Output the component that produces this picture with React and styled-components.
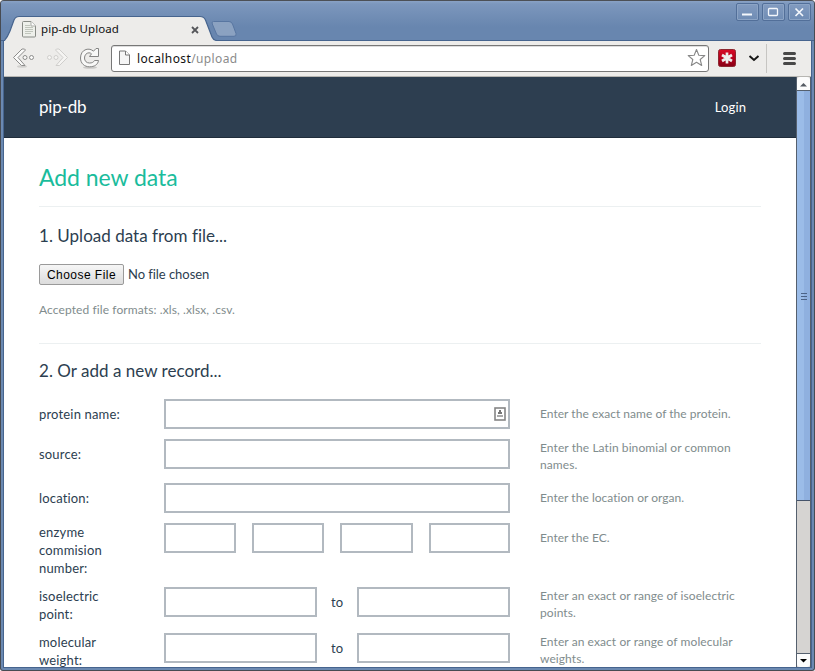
import React from "react";
import styled, { createGlobalStyle } from "styled-components";

const Global = createGlobalStyle`
  * { box-sizing: border-box; }
  body { margin: 0; background: #fff; overflow: hidden; }
`;

const Window = styled.div`
  width: 815px;
  height: 671px;
  display: flex;
  flex-direction: column;
  overflow: hidden;
  border: 1px solid #474b52;
  border-top-color: #4c5056;
  border-radius: 4px 4px 3px 3px;
  background: #6b89b1;
  font-family: "Lato", sans-serif;
`;

const TitleBar = styled.header`
  height: 40px;
  flex: none;
  display: flex;
  justify-content: space-between;
  background: linear-gradient(#89a2c5 0, #7c97bd 3px, #7490b7 12px, #6886af 26px, #6886af 39px, #46648e 39px);
`;

const TabStrip = styled.div`
  position: relative;
  width: 240px;
  height: 40px;
`;

const TabShape = styled.svg`
  position: absolute;
  left: 0;
  top: 0;
`;

const TabContent = styled.div`
  position: relative;
  display: flex;
  align-items: center;
  height: 24px;
  margin: 16px 0 0 21px;
  width: 178px;
`;

const TabTitle = styled.span`
  font: 11.5px/16px "Noto Sans", sans-serif;
  letter-spacing: 0.08px;
  margin: -1px auto 0 5px;
  color: #111;
`;

const WindowButtons = styled.div`
  display: flex;
  gap: 3px;
  padding: 2px 3px 0 0;
`;

const WindowButton = styled.span`
  width: 23px;
  height: 18px;
  border: 1px solid #526f99;
  border-radius: 2px;
  background: linear-gradient(#829bc0, #6f8cb4);
  box-shadow: inset 0 0 0 1px #8ca4c5;
  svg { display: block; }
`;

const WindowBody = styled.div`
  margin: 0 2px;
  border: 1px solid #46648e;
  border-top: 0;
`;

const Toolbar = styled.nav`
  height: 36px;
  display: flex;
  align-items: center;
  background: #edecea;
  border-bottom: 1px solid #b7b6b2;
`;

const ToolbarIcons = styled.svg`
  flex: none;
`;

const AddressBar = styled.div`
  width: 598px;
  height: 27px;
  margin-top: -1px;
  display: flex;
  align-items: center;
  padding: 0 2px 0 6px;
  border: 1px solid #777;
  border-radius: 3px;
  background: #fff;
  box-shadow: inset 0 1px 0 #ddd;
`;

const Url = styled.span`
  font: 12px/18px "Noto Sans", sans-serif;
  letter-spacing: 0.38px;
  color: #111;
  margin: 2px auto 0 6px;
  span { color: #8b8b8b; }
`;

const Viewport = styled.div`
  display: flex;
  height: 590px;
  overflow: hidden;
  background: #fff;
`;

const Page = styled.div`
  width: 792px;
  overflow: hidden;
  background: #fff;
  color: #34495e;
`;

const SiteHeader = styled.div`
  height: 61px;
  display: flex;
  justify-content: space-between;
  padding: 0 50px 0 35px;
  background: #2d3e50;
  border-bottom: 1px solid #202d3b;
  line-height: 60px;
  color: #fff;
`;

const Brand = styled.span`
  font-size: 17px;
  letter-spacing: -0.2px;
`;

const Login = styled.span`
  font-size: 13px;
  letter-spacing: 0.1px;
`;

const Main = styled.main`
  padding: 0 35px;
`;

const PageTitle = styled.h1`
  height: 69px;
  margin: 0;
  padding-top: 23px;
  border-bottom: 1px solid #ecf0f1;
  font-size: 23px;
  line-height: 32px;
  font-weight: 400;
  letter-spacing: -0.05px;
  color: #1abc9c;
`;

const SectionTitle = styled.h2`
  margin: 0;
  font-size: 17px;
  line-height: 24px;
  font-weight: 400;
  letter-spacing: 0.02px;
  color: #2c3e50;
`;

const UploadSection = styled.section`
  height: 137px;
  padding-top: 17px;
  border-bottom: 1px solid #ecf0f1;
`;

const FilePicker = styled.div`
  display: flex;
  align-items: center;
  gap: 4px;
  margin-top: 16px;
  height: 21px;
  font-size: 13px;
  color: #2c3e50;
`;

const FileName = styled.span`
  line-height: 18px;
  margin-top: -2px;
  letter-spacing: -0.05px;
`;

const FileButton = styled.button`
  width: 85px;
  height: 21px;
  padding: 1px 0 0;
  border: 1px solid #9a9a9a;
  border-radius: 2px;
  background: linear-gradient(#f6f6f6, #dcdcdc);
  font: 12px/18px "Liberation Sans", sans-serif;
  letter-spacing: 0.46px;
  color: #000;
`;

const Formats = styled.p`
  margin: 16px 0 0;
  font-size: 12px;
  line-height: 17px;
  letter-spacing: 0.1px;
  color: #7f8c8d;
`;

const RecordSection = styled.section`
  padding-top: 15px;
`;

const Form = styled.form`
  display: flex;
  flex-direction: column;
  gap: 10px;
  margin-top: 16px;
`;

const Row = styled.div`
  display: grid;
  grid-template-columns: 95px 346px 210px;
  column-gap: 30px;
  align-items: start;
`;

const Label = styled.label`
  padding-top: ${(p) => (p.$multiline ? 0 : 6)}px;
  font-size: 13px;
  line-height: 18px;
  letter-spacing: 0.17px;
  color: #2c3e50;
  white-space: pre-line;
`;

const Fields = styled.div`
  display: grid;
  grid-template-columns: ${(p) => p.$columns};
  column-gap: ${(p) => p.$gap || 0}px;
  align-items: center;
  width: 346px;
  font-size: 13px;
  text-align: center;
  color: #2c3e50;
`;

const Field = styled.div`
  height: 30px;
  display: flex;
  align-items: center;
  justify-content: flex-end;
  padding-right: 2px;
  border: 2px solid #b2b9c0;
  background: #fff;
`;

const Hint = styled.p`
  margin: 0;
  padding-top: ${(p) => (p.$multiline ? 0 : 6)}px;
  font-size: 12px;
  line-height: 17px;
  letter-spacing: ${(p) => (p.$multiline ? 0.08 : 0.03)}px;
  color: #7f8c8d;
  white-space: pre-line;
`;

const Scrollbar = styled.div`
  width: 15px;
  display: flex;
  flex-direction: column;
  border: 1px solid #55606e;
  border-top: 0;
  border-bottom: 0;
  background: #d6d4d2;
`;

const ScrollButton = styled.div`
  height: 14px;
  flex: none;
  background: #fcfcfc;
  border-radius: ${(p) => (p.$down ? "0 0 3px 3px" : "3px 3px 0 0")};
  border-${(p) => (p.$down ? "top" : "bottom")}: 1px solid #55606e;
  svg { display: block; }
`;

const Thumb = styled.div`
  height: 410px;
  display: flex;
  align-items: center;
  justify-content: center;
  background: linear-gradient(90deg, #9bbce8 0 7px, #8fb0df 7px);
  border-bottom: 1px solid #45536a;
`;

const ScrollGap = styled.div`
  flex: 1;
`;

const rows = [
  { label: "protein name:", hint: "Enter the exact name of the protein.", kind: "badge" },
  { label: "source:", hint: "Enter the Latin binomial or common\nnames.", kind: "single" },
  { label: "location:", hint: "Enter the location or organ.", kind: "single" },
  { label: "enzyme\ncommision\nnumber:", hint: "Enter the EC.", kind: "quad" },
  { label: "isoelectric\npoint:", hint: "Enter an exact or range of isoelectric\npoints.", kind: "range" },
  { label: "molecular\nweight:", hint: "Enter an exact or range of molecular\nweights.", kind: "range" },
];

function ContactBadge() {
  return (
    <svg width="12" height="14" viewBox="0 0 12 14">
      <rect x="1" y="1" width="10" height="12" fill="#fff" stroke="#858585" strokeWidth="1.6" />
      <rect x="5" y="3" width="2" height="2" fill="#777" />
      <rect x="4" y="5" width="4" height="2" fill="#777" />
      <rect x="3" y="8" width="6" height="2" fill="#aaa" />
    </svg>
  );
}

function FieldGroup({ kind }) {
  if (kind === "quad") {
    return (
      <Fields $columns="72px 72px 73px 81px" $gap={16}>
        <Field /><Field /><Field /><Field />
      </Fields>
    );
  }
  if (kind === "range") {
    return (
      <Fields $columns="153px 40px 153px">
        <Field /><span>to</span><Field />
      </Fields>
    );
  }
  return <Fields $columns="346px"><Field>{kind === "badge" && <ContactBadge />}</Field></Fields>;
}

function Tab() {
  return (
    <TabStrip>
      <TabShape width="240" height="40" viewBox="1 1 240 40">
        <path d="M4 41V40C7 38 8 36 10 31L14 20Q15.5 16.5 19 16.5H200Q204 16.5 205.5 20L212 37Q213.5 40.5 217 40.5V42H4Z" fill="#edecea" />
        <path d="M4 41C7 38 8 36 10 31L14 20Q15.5 16.5 19 16.5H200Q204 16.5 205.5 20L212 37Q213.5 40.5 217 40.5" fill="none" stroke="#46648e" strokeWidth="1.2" />
        <path d="M213.500 21.500H229Q231.500 21.500 232.500 24L236 33.500Q236.800 36.300 234 36.300H220Q217.500 36.300 216.500 34L212.300 24Q211.300 21.500 213.500 21.500Z" fill="#8ba2c1" stroke="#5876a1" />
      </TabShape>
      <TabContent>
        <svg width="14" height="17" viewBox="0 0 14 17">
          <path d="M.5 1.500Q.5.500 1.500.500H9L13.500 5V15Q13.500 16 12.500 16H1.500Q.5 16 .5 15Z" fill="#eef0eb" stroke="#888b86" />
          <path d="M9 .5V5H13.500" fill="#fff" stroke="#a9aba6" />
          <path d="M3 4.500H8M3 6.500H11M3 8.500H11M3 10.500H11M3 12.500H9" stroke="#c0c5bc" />
        </svg>
        <TabTitle>pip-db Upload</TabTitle>
        <svg width="9" height="9" viewBox="0 0 9 9"><path d="M1 2L7 8M7 2L1 8" stroke="#55565a" strokeWidth="1.800" /></svg>
      </TabContent>
    </TabStrip>
  );
}

function BrowserToolbar() {
  return (
    <Toolbar>
      <ToolbarIcons width="107" height="35" viewBox="4 41 107 35">
        <ellipse cx="22" cy="66.500" rx="5" ry="1.200" fill="#d0cfcd" />
        <g fill="#fafaf9" stroke="#8c8c8b">
          <path d="M22 49L13.500 57.500L21.500 65.500H25L18 57.500L25.500 50L24.500 49Z" />
          <circle cx="25" cy="57.500" r="2" /><circle cx="31.500" cy="57.500" r="2" />
        </g>
        <g fill="#f5f4f2" stroke="#cfcecc">
          <path d="M59 49L67.500 57.500L59.500 65.500H56L63 57.500L55.500 50L56.500 49Z" />
          <circle cx="49.500" cy="57.500" r="2" /><circle cx="56" cy="57.500" r="2" />
        </g>
        <ellipse cx="90" cy="67.500" rx="7" ry="1.300" fill="#cac9c7" />
        <path d="M93.500 51.200C91.500 49.300 88.500 48.700 86 49.500C82.500 50.500 80.500 54 80.500 58C80.500 63.500 84.500 66.800 89.500 66.800C94.500 66.800 98 64.500 98.500 60.500H94.500C93.500 62.300 92 63 89.500 63C86.500 63 84.500 61 84.500 58C84.500 55 86.500 52.800 89 52.800C90 52.800 90.800 53.200 91.500 53.800L89.500 56.500H98.500V48.500H96Z" fill="#f8f8f7" stroke="#858584" strokeLinejoin="round" />
      </ToolbarIcons>
      <AddressBar>
        <svg width="13" height="16" viewBox="0 0 13 16"><path d="M1.500 1H7.500L11.500 5V14.500H1.500Z" fill="#f5f5f5" stroke="#777" /><path d="M7.500 1V5H11.500" fill="#fff" stroke="#777" /></svg>
        <Url>localhost<span>/upload</span></Url>
        <svg width="19" height="20" viewBox="0.5 0 19 20"><path d="M10 1.500L12.300 7.200L18.300 7.600L13.700 11.500L15.200 17.500L10 14.300L4.800 17.500L6.300 11.500L1.700 7.600L7.700 7.200Z" fill="#fff" stroke="#888" strokeWidth="1.100" strokeLinejoin="round" /></svg>
      </AddressBar>
      <ToolbarIcons width="102" height="35" viewBox="709 41 102 35">
        <defs><linearGradient id="red" x2="0" y2="1"><stop stopColor="#d80b27" /><stop offset=".5" stopColor="#b7001c" /><stop offset="1" stopColor="#870015" /></linearGradient></defs>
        <rect x="718.500" y="49.500" width="17" height="17" rx="2" fill="url(#red)" stroke="#8c2830" />
        <path d="M727 52.500V63.500M722 55L732 61M732 55L722 61" stroke="#eee" strokeWidth="2.700" />
        <path d="M749.500 56L754 60L758.500 56" fill="none" stroke="#171717" strokeWidth="2" />
        <path d="M766.500 44V73" stroke="#c6c5c2" />
        <path d="M784.500 53.500H794.500M784.500 58.500H794.500M784.500 63.500H794.500" stroke="#484848" strokeWidth="3" strokeLinecap="round" />
      </ToolbarIcons>
    </Toolbar>
  );
}

export default function App() {
  return (
    <Window>
      <Global />
      <TitleBar>
        <Tab />
        <WindowButtons>
          <WindowButton><svg width="21" height="16"><path d="M5 10.500H15" stroke="#f4f7fc" strokeWidth="2" /></svg></WindowButton>
          <WindowButton><svg width="21" height="16"><rect x="5.500" y="4.500" width="9" height="7" rx="1" fill="none" stroke="#f4f7fc" strokeWidth="1.300" /></svg></WindowButton>
          <WindowButton><svg width="21" height="16"><path d="M6.500 4.500L14 12M14 4.500L6.500 12" stroke="#f4f7fc" strokeWidth="1.700" /></svg></WindowButton>
        </WindowButtons>
      </TitleBar>
      <WindowBody>
        <BrowserToolbar />
        <Viewport>
          <Page>
            <SiteHeader><Brand>pip-db</Brand><Login>Login</Login></SiteHeader>
            <Main>
              <PageTitle>Add new data</PageTitle>
              <UploadSection>
                <SectionTitle>1. Upload data from file...</SectionTitle>
                <FilePicker><FileButton type="button">Choose File</FileButton><FileName>No file chosen</FileName></FilePicker>
                <Formats>Accepted file formats: .xls, .xlsx, .csv.</Formats>
              </UploadSection>
              <RecordSection>
                <SectionTitle>2. Or add a new record...</SectionTitle>
                <Form>
                  {rows.map((r) => (
                    <Row key={r.label}>
                      <Label $multiline={r.label.includes("\n")}>{r.label}</Label>
                      <FieldGroup kind={r.kind} />
                      <Hint $multiline={r.hint.includes("\n")}>{r.hint}</Hint>
                    </Row>
                  ))}
                </Form>
              </RecordSection>
            </Main>
          </Page>
          <Scrollbar>
            <ScrollButton><svg width="13" height="13"><path d="M3 9.500H10L6.500 6Z" fill="#555a62" /></svg></ScrollButton>
            <Thumb><svg width="6" height="8"><path d="M0 1.500H6M0 4.500H6M0 7.500H6" stroke="#4c6386" /></svg></Thumb>
            <ScrollGap />
            <ScrollButton $down><svg width="13" height="13"><path d="M3 5H10L6.500 8.500Z" fill="#000" /></svg></ScrollButton>
          </Scrollbar>
        </Viewport>
      </WindowBody>
    </Window>
  );
}
